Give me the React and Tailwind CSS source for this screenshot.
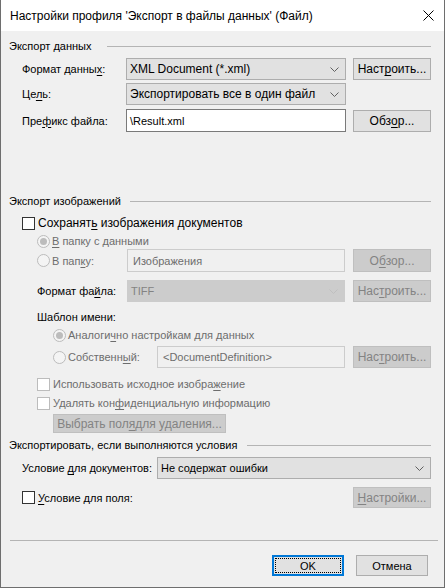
import React from "react";

const U = ({ children }) => <span className="underline underline-offset-2">{children}</span>;

function Btn({ children, disabled, className = "", h = "h-[22px]" }) {
  return (
    <div
      className={`${h} flex items-center justify-center border whitespace-nowrap ${
        disabled ? "bg-[#cccccc] border-[#bfbfbf] text-[#838383]" : "bg-[#e1e1e1] border-[#adadad] text-black"
      } ${className}`}
    >
      {children}
    </div>
  );
}

function Chevron({ disabled }) {
  return (
    <svg width="9" height="5" viewBox="0 0 9 5" className="shrink-0">
      <path d="M0.5 0.5 L4.5 4.5 L8.5 0.5" fill="none" stroke={disabled ? "#bfbfbf" : "#606060"} strokeWidth="1" />
    </svg>
  );
}

function Combo({ value, disabled, className = "" }) {
  return (
    <div
      className={`h-full flex items-center justify-between pl-[3px] pr-[6px] border ${
        disabled ? "bg-[#cccccc] border-[#cccccc] text-[#838383]" : "bg-[#e1e1e1] border-[#adadad] text-black"
      } ${className}`}
    >
      <span className="whitespace-nowrap">{value}</span>
      <Chevron disabled={disabled} />
    </div>
  );
}

function Check({ disabled }) {
  return (
    <div
      className={`w-[13px] h-[13px] shrink-0 bg-white border ${disabled ? "border-[#bcbcbc]" : "border-[#333333]"}`}
    />
  );
}

function Radio({ checked }) {
  return (
    <div className="w-[13px] h-[13px] shrink-0 rounded-full border border-[#bcbcbc] bg-[#f4f4f4] flex items-center justify-center">
      {checked && <div className="w-[7px] h-[7px] rounded-full bg-[#bcbcbc]" />}
    </div>
  );
}

function Header({ children, w, className = "" }) {
  return (
    <div className={`h-[16px] flex items-center pl-[8px] ${className}`}>
      <div className={`${w} shrink-0 whitespace-nowrap`}>{children}</div>
      <div className="flex-1 h-px bg-[#b4b4b4] mr-[13px]" />
    </div>
  );
}

export default function App() {
  return (
    <div className="w-[445px] h-[588px] bg-[#f0f0f0] border-x border-b border-[#6e6e6e] flex flex-col text-[11px] leading-[16px] text-black font-['Liberation_Sans',Arial,sans-serif] overflow-hidden">
      {/* title bar */}
      <div className="h-[31px] shrink-0 bg-white flex items-center justify-between pl-[9px] pr-[10px] text-[12px]">
        <span className="whitespace-nowrap">Настройки профиля 'Экспорт в файлы данных' (Файл)</span>
        <svg width="11" height="11" viewBox="0 0 11 11">
          <path d="M0.5 0.5 L10.5 10.5 M10.5 0.5 L0.5 10.5" stroke="#000" strokeWidth="1" />
        </svg>
      </div>

      {/* Export data */}
      <Header w="w-[98px]" className="mt-[7px]">Экспорт данных</Header>

      <div className="mt-[4px] h-[22px] flex items-center pl-[21px]">
        <div className="w-[104px] shrink-0 whitespace-nowrap">
          Формат данны<U>х</U>:
        </div>
        <Combo value="XML Document (*.xml)" className="w-[220px] text-[12px]" />
        <Btn className="w-[78px] ml-[7px] text-[12px]">
          Наст<U>р</U>оить...
        </Btn>
      </div>

      <div className="mt-[3px] h-[22px] flex items-center pl-[21px]">
        <div className="w-[104px] shrink-0">
          Це<U>л</U>ь:
        </div>
        <Combo value="Экспортировать все в один файл" className="w-[220px] text-[12px]" />
      </div>

      <div className="mt-[4px] h-[23px] flex items-center pl-[21px]">
        <div className="w-[104px] shrink-0 whitespace-nowrap">
          Пре<U>ф</U>икс файла:
        </div>
        <div className="w-[220px] h-full bg-white border border-[#7a7a7a] flex items-center pl-[3px]">\Result.xml</div>
        <Btn className="w-[78px] ml-[7px] text-[12px]">
          Обз<U>о</U>р...
        </Btn>
      </div>

      {/* Export images */}
      <Header w="w-[121px]" className="mt-[61px]">Экспорт изображений</Header>

      <div className="mt-[6px] h-[16px] flex items-center pl-[21px]">
        <Check />
        <span className="ml-[3px] whitespace-nowrap text-[12px]">
          Сохранят<U>ь</U> изображения документов
        </span>
      </div>

      <div className="mt-[2px] h-[16px] flex items-center pl-[36px] text-[#6d6d6d]">
        <Radio checked />
        <span className="ml-[2px]">
          <U>В</U> папку с данными
        </span>
      </div>

      <div className="h-[23px] flex items-center pl-[36px]">
        <Radio />
        <div className="ml-[2px] w-[75px] shrink-0 text-[#6d6d6d]">
          В пап<U>к</U>у:
        </div>
        <div className="w-[218px] h-full border border-[#cccccc] bg-[#f0f0f0] text-[#6d6d6d] flex items-center pl-[5px]">
          Изображения
        </div>
        <Btn disabled h="h-[23px]" className="w-[78px] ml-[8px] text-[12px]">
          О<U>б</U>зор...
        </Btn>
      </div>

      <div className="mt-[8px] h-[22px] flex items-center pl-[36px]">
        <div className="w-[90px] shrink-0 whitespace-nowrap">
          Формат фа<U>й</U>ла:
        </div>
        <Combo disabled value="TIFF" className="w-[218px]" />
        <Btn disabled className="w-[78px] ml-[8px] text-[12px]">
          Нас<U>т</U>роить...
        </Btn>
      </div>

      <div className="mt-[7px] h-[16px] flex items-center pl-[36px]">Шаблон имени:</div>

      <div className="mt-[2px] h-[16px] flex items-center pl-[52px] text-[#6d6d6d]">
        <Radio checked />
        <span className="ml-[2px] whitespace-nowrap">
          Аналоги<U>ч</U>но настройкам для данных
        </span>
      </div>

      <div className="mt-[3px] h-[22px] flex items-center pl-[52px]">
        <Radio />
        <div className="ml-[2px] w-[89px] shrink-0 text-[#6d6d6d]">
          Собственн<U>ы</U>й:
        </div>
        <div className="w-[188px] h-full border border-[#cccccc] bg-[#f0f0f0] text-[#6d6d6d] flex items-center pl-[5px]">
          &lt;DocumentDefinition&gt;
        </div>
        <Btn disabled className="w-[78px] ml-[8px] text-[12px]">
          Нас<U>т</U>роить...
        </Btn>
      </div>

      <div className="mt-[8px] h-[16px] flex items-center pl-[36px] text-[#6d6d6d]">
        <Check disabled />
        <span className="ml-[3px] whitespace-nowrap">
          Использовать исходное изобра<U>ж</U>ение
        </span>
      </div>

      <div className="mt-[3px] h-[16px] flex items-center pl-[36px] text-[#6d6d6d]">
        <Check disabled />
        <span className="ml-[3px] whitespace-nowrap">
          Удалять кон<U>ф</U>иденциальную информацию
        </span>
      </div>

      <div className="mt-[3px] flex pl-[52px]">
        <Btn disabled h="h-[19px]" className="w-[173px] text-[12px]">
          Выбрать пол<U>я</U>{" "}для удаления...
        </Btn>
      </div>

      {/* Conditions */}
      <Header w="w-[238px]" className="mt-[4px]">Экспортировать, если выполняются условия</Header>

      <div className="mt-[4px] h-[22px] flex items-center pl-[21px]">
        <div className="w-[135px] shrink-0 whitespace-nowrap">
          Условие <U>д</U>ля документов:
        </div>
        <Combo value="Не содержат ошибки" className="w-[274px]" />
      </div>

      <div className="mt-[8px] h-[21px] flex items-center pl-[21px] pr-[13px]">
        <Check />
        <span className="ml-[3px] whitespace-nowrap">
          <U>У</U>словие для поля:
        </span>
        <Btn disabled h="h-[21px]" className="w-[78px] ml-auto text-[12px]">
          <U>Н</U>астройки...
        </Btn>
      </div>

      <div className="mt-[32px] h-px bg-[#b4b4b4] ml-[9px] mr-[6px]" />

      <div className="mt-[14px] h-[21px] flex pl-[271px]">
        <div className="relative w-[72px] h-[21px] bg-[#e1e1e1] border-2 border-[#0078d7] flex items-center justify-center">
          <div className="absolute inset-[1px] border border-dotted border-black" />
          OK
        </div>
        <Btn h="h-[21px]" className="w-[72px] ml-[12px]">
          Отмена
        </Btn>
      </div>
    </div>
  );
}
